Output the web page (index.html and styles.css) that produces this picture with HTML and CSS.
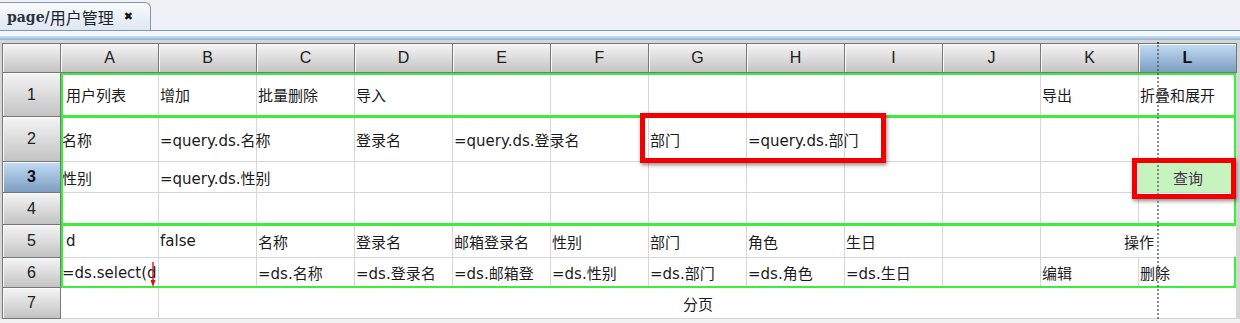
FILE: index.html
```html
<!doctype html>
<html>
<head>
    <title>page/用户管理</title>
    <meta charset="utf-8">
    <link rel="stylesheet" href="styles.css">
</head>
<body>
    <!-- 标签栏 -->
    <div class="tabbar">
        <div class="tab"><span class="tab-path">page/</span>用户管理<span class="tab-close">&#x2716;</span></div>
    </div>

    <div class="pane">
        <div class="strip"></div>

        <!-- 表格设计器 -->
        <div class="sheet">
            <table cellspacing="0">
                <colgroup>
                    <col class="col-head">
                    <col span="12" class="col-cell">
                </colgroup>
                <tr class="row-head">
                    <th></th>
                    <th>A</th>
                    <th>B</th>
                    <th>C</th>
                    <th>D</th>
                    <th>E</th>
                    <th>F</th>
                    <th>G</th>
                    <th>H</th>
                    <th>I</th>
                    <th>J</th>
                    <th>K</th>
                    <th class="sel">L</th>
                </tr>
                <!-- 1 -->
                <tr class="row-1">
                    <th>1</th>
                    <td class="ind">用户列表</td>
                    <td>增加</td>
                    <td>批量删除</td>
                    <td>导入</td>
                    <td></td>
                    <td></td>
                    <td></td>
                    <td></td>
                    <td></td>
                    <td></td>
                    <td>导出</td>
                    <td>折叠和展开</td>
                </tr>
                <!-- 2 -->
                <tr class="row-2">
                    <th>2</th>
                    <td>名称</td>
                    <td>=query.ds.名称</td>
                    <td></td>
                    <td>登录名</td>
                    <td>=query.ds.登录名</td>
                    <td></td>
                    <td>部门</td>
                    <td>=query.ds.部门</td>
                    <td></td>
                    <td></td>
                    <td></td>
                    <td></td>
                </tr>
                <!-- 3 -->
                <tr class="row-3">
                    <th class="sel">3</th>
                    <td>性别</td>
                    <td>=query.ds.性别</td>
                    <td></td>
                    <td></td>
                    <td></td>
                    <td></td>
                    <td></td>
                    <td></td>
                    <td></td>
                    <td></td>
                    <td></td>
                    <td class="btn">查询</td>
                </tr>
                <!-- 4 -->
                <tr class="row-4">
                    <th>4</th>
                    <td></td>
                    <td></td>
                    <td></td>
                    <td></td>
                    <td></td>
                    <td></td>
                    <td></td>
                    <td></td>
                    <td></td>
                    <td></td>
                    <td></td>
                    <td></td>
                </tr>
                <!-- 5 -->
                <tr class="row-5">
                    <th>5</th>
                    <td class="ind">d</td>
                    <td>false</td>
                    <td>名称</td>
                    <td>登录名</td>
                    <td>邮箱登录名</td>
                    <td>性别</td>
                    <td>部门</td>
                    <td>角色</td>
                    <td>生日</td>
                    <td></td>
                    <td colspan="2" class="mid">操作</td>
                </tr>
                <!-- 6 -->
                <tr class="row-6">
                    <th>6</th>
                    <td>=ds.select(d</td>
                    <td></td>
                    <td>=ds.名称</td>
                    <td>=ds.登录名</td>
                    <td>=ds.邮箱登</td>
                    <td>=ds.性别</td>
                    <td>=ds.部门</td>
                    <td>=ds.角色</td>
                    <td>=ds.生日</td>
                    <td></td>
                    <td>编辑</td>
                    <td>删除</td>
                </tr>
                <!-- 7 -->
                <tr class="row-7">
                    <th>7</th>
                    <td></td>
                    <td colspan="11" class="mid">分页</td>
                </tr>
            </table>

            <!-- 选区和标注 -->
            <div class="block block-1"></div>
            <div class="block block-2"></div>
            <div class="block block-3"></div>
            <div class="mark mark-dept"></div>
            <div class="mark mark-query"></div>
            <div class="split"></div>
            <svg class="cursor" width="6" height="26" viewBox="0 0 6 26">
                <line x1="3" y1="0" x2="3" y2="20" stroke="#e01010" stroke-width="1.4"/>
                <path d="M0.5 18 L5.5 18 L3 25 Z" fill="#e01010"/>
            </svg>
        </div>
    </div>
</body>
</html>
```

FILE: styles.css
```css
body {
    margin: 0;
    width: 1240px;
    height: 323px;
    overflow: hidden;
    background: #f2f2f2;
    font-family: "DejaVu Sans", "Noto Sans CJK SC", sans-serif;
    font-size: 15px;
    color: #1b1b1b;
}

/* 标签栏 */
.tabbar {
    height: 30px;
    display: flex;
    align-items: flex-end;
    background: #eef2f7;
    border-bottom: 1px solid #8397b1;
}

.tab {
    width: 143px;
    height: 27px;
    padding-left: 7px;
    display: flex;
    align-items: center;
    background: linear-gradient(#f8fafd, #dfe7f1);
    border: 1px solid #8397b1;
    border-left: none;
    border-bottom: none;
    border-radius: 0 6px 0 0;
    font-family: "Noto Sans CJK SC", sans-serif;
    font-size: 16px;
    color: #1c2430;
}

.tab-path {
    font-family: "DejaVu Serif", serif;
    font-size: 14px;
    font-weight: 600;
    color: #2a3340;
}

.tab-close {
    margin-left: 10px;
    font-family: "DejaVu Sans", sans-serif;
    font-size: 11px;
    color: #111;
}

.pane {
    padding-top: 5px;
    background: #f3f6fa;
}

.strip {
    height: 4px;
    background: linear-gradient(#cfe2f6, #8eb3db);
}

/* 表格 */
.sheet {
    position: relative;
    padding: 3px 4px 0 2px;
    background: #d6d6d6;
}

table {
    width: 1234px;
    table-layout: fixed;
    border-collapse: collapse;
    background: #fff;
}

.col-head {
    width: 58px;
}

.col-cell {
    width: 98px;
}

th {
    padding: 0;
    border: 1px solid #777;
    background: linear-gradient(#f4f4f4, #c2c2c2);
    box-shadow: inset 1px 1px 0 #fafafa;
    font-family: "Liberation Sans", sans-serif;
    font-size: 16px;
    font-weight: normal;
    color: #202020;
    text-align: center;
}

th.sel {
    background: linear-gradient(#c0dbf4, #7c9cc0);
    font-weight: bold;
    color: #111;
}

td {
    padding: 0 0 0 1px;
    border: 1px solid #d6d6d6;
    white-space: nowrap;
    overflow: visible;
    text-align: left;
    vertical-align: middle;
}

td.ind {
    padding-left: 5px;
}

td.mid {
    text-align: center;
}

td.btn {
    background: #c6f4bf;
    color: #4b2d4f;
    text-align: center;
}

.row-head { height: 29px; }
.row-1 { height: 44px; }
.row-2 { height: 45px; }
.row-3 { height: 31px; }
.row-4 { height: 32px; }
.row-5 { height: 33px; }
.row-6 { height: 30px; }
.row-7 { height: 31px; }

/* 选区框 */
.block {
    position: absolute;
    left: 61px;
    width: 1175px;
    box-sizing: border-box;
    border: 2px solid #3ced3c;
}

.block-1 {
    top: 33px;
    height: 44px;
}

.block-2 {
    top: 76px;
    height: 109px;
}

.block-3 {
    top: 184px;
    height: 64px;
    border-right: none;
}

.block-3::after {
    content: "";
    position: absolute;
    right: 0;
    top: 31px;
    bottom: 0;
    width: 2px;
    background: #3ced3c;
}

/* 红色标注 */
.mark {
    position: absolute;
    box-sizing: border-box;
    border: 5px solid #f20000;
    box-shadow: 1px 2px 4px rgba(0, 0, 0, 0.45);
}

.mark-dept {
    left: 640px;
    top: 73px;
    width: 246px;
    height: 50px;
}

.mark-query {
    left: 1132px;
    top: 118px;
    width: 104px;
    height: 41px;
}

.split {
    position: absolute;
    left: 1157px;
    top: 2px;
    bottom: 0;
    border-left: 2px dotted #444;
    width: 0;
    transform: scaleX(0.6);
}

.cursor {
    position: absolute;
    left: 150px;
    top: 222px;
}
```
